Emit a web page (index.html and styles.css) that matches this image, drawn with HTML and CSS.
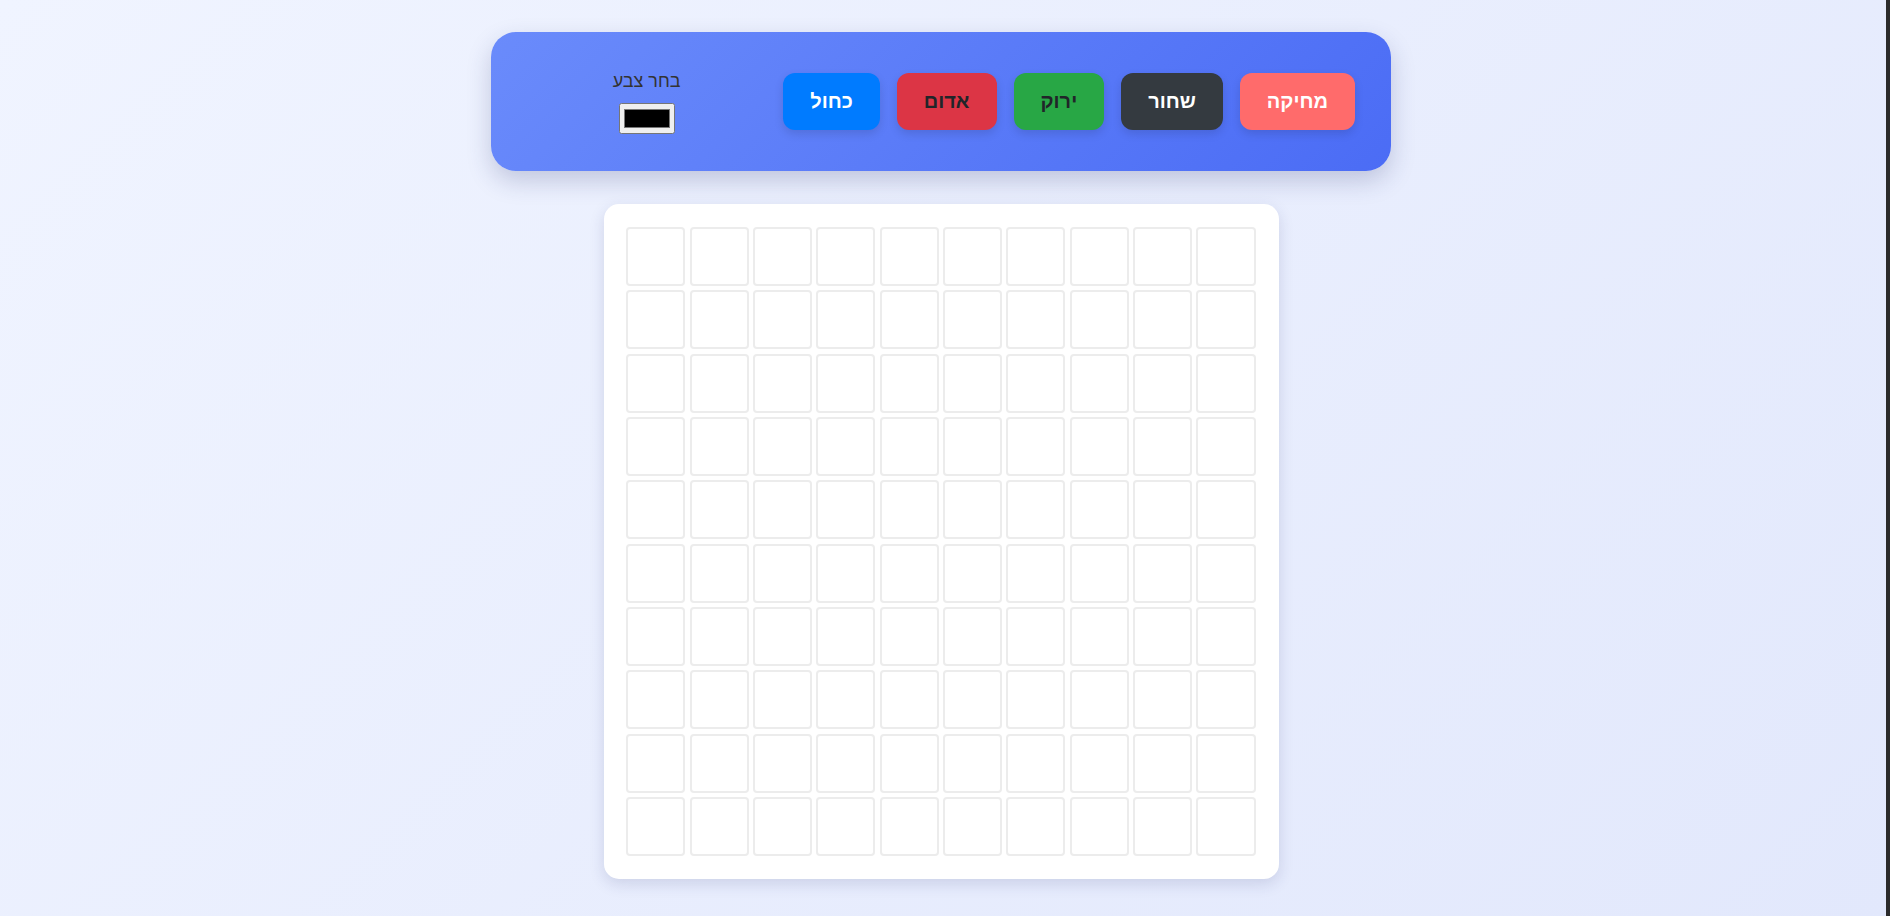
FILE: index.html
```html
<!DOCTYPE html>
<html lang="he" dir="rtl">
<head>
<meta charset="utf-8">
<title>ציור פיקסלים</title>
<link rel="stylesheet" href="styles.css">
</head>
<body>
<div class="page">
  <div class="toolbar">
    <button class="btn btn-erase">מחיקה</button>
    <button class="btn btn-black">שחור</button>
    <button class="btn btn-green">ירוק</button>
    <button class="btn btn-red">אדום</button>
    <button class="btn btn-blue">כחול</button>
    <div class="picker">
      <label class="picker-label" for="color">בחר צבע</label>
      <input class="picker-input" id="color" type="color" value="#000000">
    </div>
  </div>
  <div class="board">
    <div class="grid">
      <div class="cell"></div><div class="cell"></div><div class="cell"></div><div class="cell"></div><div class="cell"></div><div class="cell"></div><div class="cell"></div><div class="cell"></div><div class="cell"></div><div class="cell"></div>
      <div class="cell"></div><div class="cell"></div><div class="cell"></div><div class="cell"></div><div class="cell"></div><div class="cell"></div><div class="cell"></div><div class="cell"></div><div class="cell"></div><div class="cell"></div>
      <div class="cell"></div><div class="cell"></div><div class="cell"></div><div class="cell"></div><div class="cell"></div><div class="cell"></div><div class="cell"></div><div class="cell"></div><div class="cell"></div><div class="cell"></div>
      <div class="cell"></div><div class="cell"></div><div class="cell"></div><div class="cell"></div><div class="cell"></div><div class="cell"></div><div class="cell"></div><div class="cell"></div><div class="cell"></div><div class="cell"></div>
      <div class="cell"></div><div class="cell"></div><div class="cell"></div><div class="cell"></div><div class="cell"></div><div class="cell"></div><div class="cell"></div><div class="cell"></div><div class="cell"></div><div class="cell"></div>
      <div class="cell"></div><div class="cell"></div><div class="cell"></div><div class="cell"></div><div class="cell"></div><div class="cell"></div><div class="cell"></div><div class="cell"></div><div class="cell"></div><div class="cell"></div>
      <div class="cell"></div><div class="cell"></div><div class="cell"></div><div class="cell"></div><div class="cell"></div><div class="cell"></div><div class="cell"></div><div class="cell"></div><div class="cell"></div><div class="cell"></div>
      <div class="cell"></div><div class="cell"></div><div class="cell"></div><div class="cell"></div><div class="cell"></div><div class="cell"></div><div class="cell"></div><div class="cell"></div><div class="cell"></div><div class="cell"></div>
      <div class="cell"></div><div class="cell"></div><div class="cell"></div><div class="cell"></div><div class="cell"></div><div class="cell"></div><div class="cell"></div><div class="cell"></div><div class="cell"></div><div class="cell"></div>
      <div class="cell"></div><div class="cell"></div><div class="cell"></div><div class="cell"></div><div class="cell"></div><div class="cell"></div><div class="cell"></div><div class="cell"></div><div class="cell"></div><div class="cell"></div>
    </div>
  </div>
</div>
<div class="scroll-edge"></div>
</body>
</html>
```

FILE: styles.css
```css
html, body {
  margin: 0;
  padding: 0;
}

body {
  min-height: 100vh;
  font-family: "Liberation Sans", "DejaVu Sans", sans-serif;
  background: linear-gradient(135deg, #f0f4ff 0%, #e2e8fc 100%);
  overflow: hidden;
}

.page {
  box-sizing: border-box;
  min-height: 100vh;
  padding: 32px 8px 0 0;
  display: flex;
  flex-direction: column;
  align-items: center;
  gap: 33px;
}

.toolbar {
  box-sizing: border-box;
  width: 900px;
  height: 139px;
  padding: 0 36px;
  border-radius: 25px;
  background: linear-gradient(135deg, #6a8bfb 0%, #4b6cf5 100%);
  box-shadow: 0 10px 25px rgba(40, 50, 110, 0.22);
  display: flex;
  align-items: center;
  gap: 17px;
}

.btn {
  height: 57px;
  padding: 0 27px;
  border: none;
  border-radius: 12px;
  font-family: "Liberation Sans", "DejaVu Sans", sans-serif;
  font-weight: bold;
  font-size: 20px;
  box-shadow: 0 4px 10px rgba(0, 0, 0, 0.12);
  cursor: pointer;
}

.btn-erase { background: #ff6b6b; color: #ffffff; }
.btn-black { background: #343a40; color: #ffffff; }
.btn-green { background: #28a745; color: #212529; }
.btn-red { background: #dc3545; color: #212529; }
.btn-blue { background: #007bff; color: #ffffff; }

.picker {
  flex: 1;
  display: flex;
  flex-direction: column;
  align-items: center;
  gap: 9px;
}

.picker-label {
  font-size: 18px;
  color: #333333;
  line-height: 25px;
}

.picker-input {
  box-sizing: border-box;
  width: 56px;
  height: 31px;
  margin: 0;
}

.board {
  box-sizing: border-box;
  width: 675px;
  padding: 23px;
  background: #ffffff;
  border-radius: 15px;
  box-shadow: 0 5px 15px rgba(40, 50, 110, 0.15);
}

.grid {
  display: grid;
  grid-template-columns: repeat(10, 1fr);
  gap: 4.3px;
}

.cell {
  box-sizing: border-box;
  aspect-ratio: 1 / 1;
  border: 2px solid #ececec;
  border-radius: 4px;
  background: #ffffff;
}

.scroll-edge {
  position: fixed;
  top: 0;
  right: 0;
  width: 4px;
  height: 100vh;
  background: #2b2b2b;
}
```
